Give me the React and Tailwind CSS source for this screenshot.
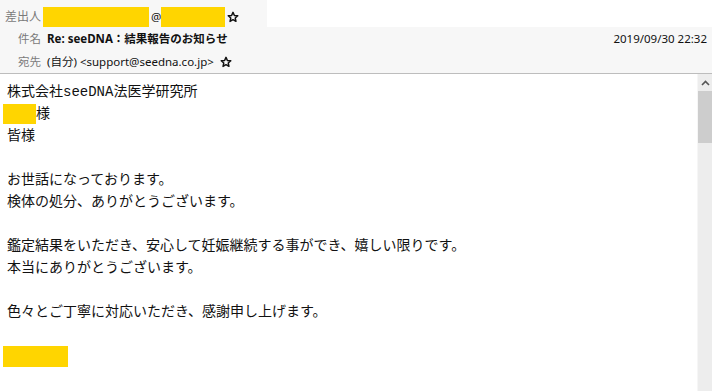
const hdr = { fontFamily: '"Noto Sans", "Noto Sans CJK JP", sans-serif' }

function Star() {
  return (
    <svg width="12" height="12" viewBox="0 0 24 24" className="shrink-0">
      <path d="M12 2.8l2.8 6.1 6.7.7-5 4.5 1.4 6.6L12 17.3l-5.9 3.4 1.4-6.6-5-4.5 6.7-.7z"
        fill="none" stroke="#111" strokeWidth="3" strokeLinejoin="round"/>
    </svg>
  )
}

function Redact({ className }) {
  return <span className={`inline-block bg-[#ffd500] ${className}`}/>
}

export default function App() {
  const lines = [
    'お世話になっております。',
    '検体の処分、ありがとうございます。',
    '',
    '鑑定結果をいただき、安心して妊娠継続する事ができ、嬉しい限りです。',
    '本当にありがとうございます。',
    '',
    '色々とご丁寧に対応いただき、感謝申し上げます。',
    '',
  ]

  return (
    <div className="w-[712px] h-[391px] overflow-hidden bg-white flex flex-col">

      {/* Header */}
      <div className="bg-[#f7f7f7] border-b border-[#bdbdbd] h-[74px] shrink-0 text-[11.5px] text-[#111]" style={hdr}>
        <div className="h-[27px] flex">
          <div className="w-[267px] flex items-center pl-[5px] pt-[7px]">
            <span className="text-[#7a7a7a] leading-none text-[12px]">差出人</span>
            <Redact className="w-[106px] h-[20px] ml-[2px]"/>
            <span className="ml-[2px] leading-none">@</span>
            <Redact className="w-[64px] h-[20px]"/>
            <span className="ml-[2px]"><Star/></span>
          </div>
          <div className="flex-1 bg-white"/>
        </div>
        <div className="h-[23px] flex items-center pr-[5px]">
          <span className="w-[41px] text-right text-[#7a7a7a]">件名</span>
          <span className="ml-[6px] font-bold">Re: seeDNA：結果報告のお知らせ</span>
          <span className="ml-auto">2019/09/30 22:32</span>
        </div>
        <div className="h-[23px] flex items-center">
          <span className="w-[41px] text-right text-[#7a7a7a]">宛先</span>
          <span className="ml-[6px]">(自分) &lt;support@seedna.co.jp&gt;</span>
          <span className="ml-[6px]"><Star/></span>
        </div>
      </div>

      {/* Body */}
      <div className="flex flex-1 min-h-0">
        <div className="flex-1 pl-[7px] pt-[7px] text-[14px] leading-[22px] text-[#111]"
          style={{ fontFamily: '"Liberation Mono", "Noto Sans CJK JP", monospace' }}>
          <div>株式会社seeDNA法医学研究所</div>
          <div className="flex items-center">
            <Redact className="w-[33px] h-[20px] -ml-[4px]"/>
            <span>様</span>
          </div>
          <div>皆様</div>
          <div className="h-[22px]"/>
          {lines.map((l, i) => (
            <div key={i} className="h-[22px]">{l}</div>
          ))}
          <div className="h-[22px] flex items-center">
            <Redact className="w-[65px] h-[21px] -ml-[4px]"/>
          </div>
        </div>

        {/* Scrollbar */}
        <div className="w-[15px] bg-[#ededed] border-l border-[#f6f6f6] flex flex-col">
          <div className="h-[17px] flex items-center justify-center">
            <svg width="9" height="6" viewBox="0 0 9 6">
              <path d="M1 5l3.5-3.5L8 5" fill="none" stroke="#555" strokeWidth="1.6"/>
            </svg>
          </div>
          <div className="h-[52px] bg-[#cdcdcd]"/>
        </div>
      </div>
    </div>
  )
}
